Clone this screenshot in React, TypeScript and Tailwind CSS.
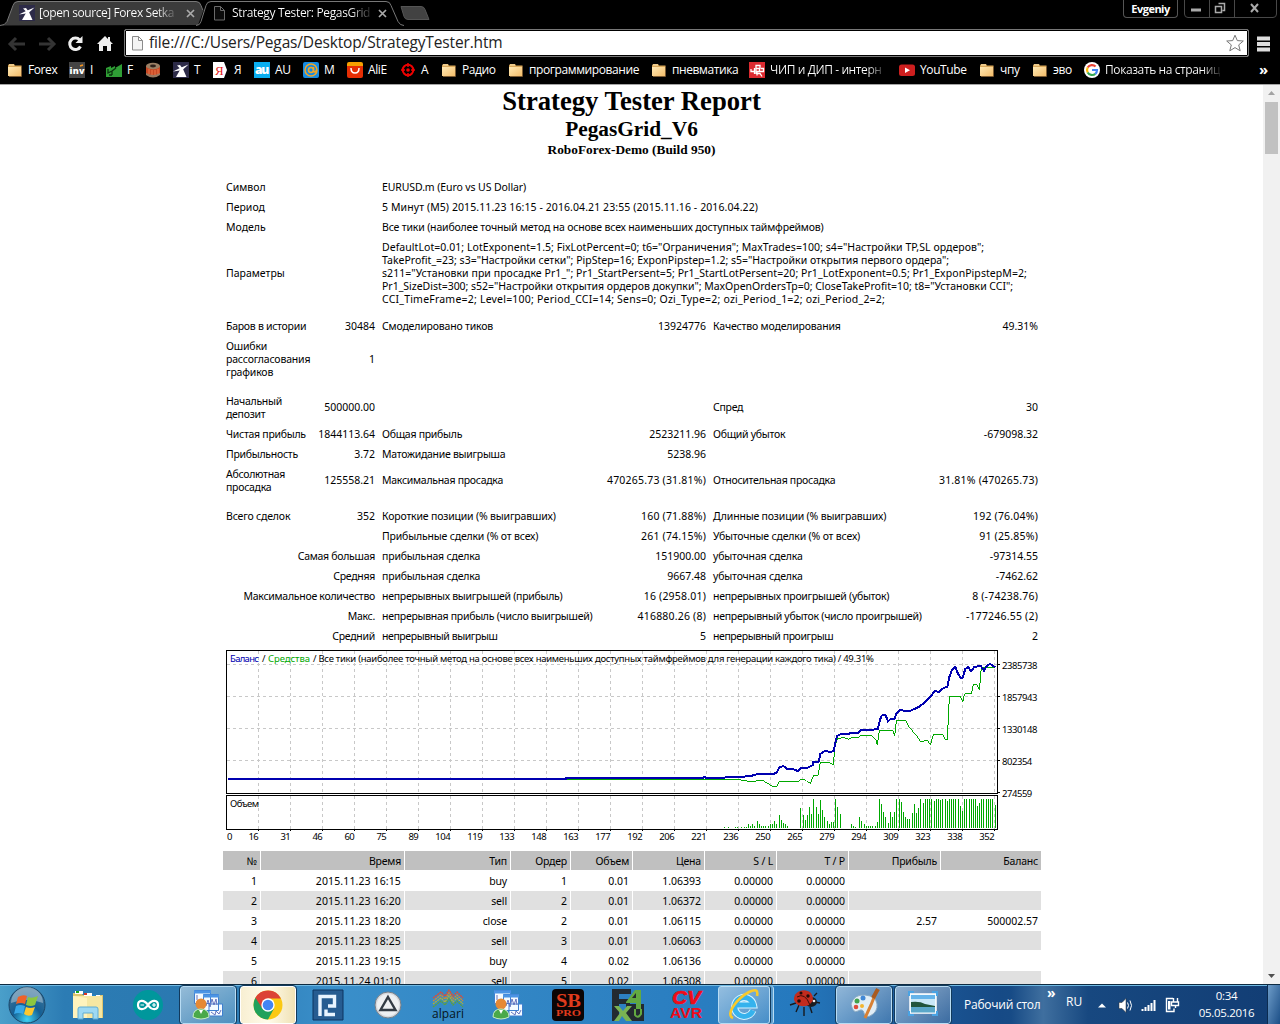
import React from 'react';

type IconProps = { children: React.ReactNode; size?: number; box?: number };

const Svg = ({ children, size = 16, box = 16 }: IconProps) => (
  <svg width={size} height={size} viewBox={`0 0 ${box} ${box}`} className="shrink-0 overflow-visible">
    {children}
  </svg>
);

/* ---------- bookmark icons ---------- */

const Folder = () => (
  <Svg>
    <path d="M1 3.5 2 2h5l1 1.5h6.5V14H1z" fill="#d9a758" />
    <path d="M1 5h13v9H1z" fill="url(#folder)" />
    <path d="M14.5 4v10.5H2" stroke="#7c5b32" fill="none" />
    <path d="M2 3h5" stroke="#ffe9b8" />
  </Svg>
);

const InvIcon = () => (
  <Svg>
    <path d="M0 0h16v16H0z" fill="#444" />
    <text x="0.5" y="12" fontSize="9" fontWeight="800" fill="#fff" textLength="14.5" fontFamily="Open Sans">inv</text>
    <path d="m11 4 3-1" stroke="#f7941d" strokeWidth="1.5" />
  </Svg>
);

const FactoryIcon = () => (
  <Svg>
    <path d="M0 6 5 4v2l4-2v2l7-4v13H0z" fill="#2f9e35" />
    <path d="M2 7v4l4-2v4m0-4 4-3m-4 7H3" stroke="#0a310d" strokeWidth="1.3" fill="none" />
  </Svg>
);

const ReelIcon = () => (
  <Svg>
    <path d="M1 4v8q7 6 14 0V4z" fill="#c64824" />
    <ellipse cx="8" cy="4" rx="7" ry="3.3" fill="#9b8065" />
    <ellipse cx="8" cy="4" rx="3" ry="1.4" fill="#2e211b" />
    <path d="M1 11v2q7 5 14 0v-2q-7 4-14 0" fill="#987961" />
    <path d="M4 7v5m3-4v5m3-5v5m3-6v5" stroke="#ed7748" />
  </Svg>
);

const MillIcon = () => (
  <Svg>
    <path d="M0 0h16v16H0z" fill="#2d2b48" />
    <path d="M7.500 7H10l3.500 8H3z" fill="#fff" />
    <path d="M0 9.500 7 6l8.500-3.500L10 7.500 7 8.500z" fill="#fff" />
    <path d="m4 3.500 3-.5 2.500 3.500L7.500 7z" fill="#fff" />
  </Svg>
);

const YandexIcon = () => (
  <Svg>
    <path d="M0 0h11l3 8-3 8H0z" fill="#fff" />
    <text x="2" y="13" fontSize="13" fill="#e51b23" fontFamily="Liberation Serif">Я</text>
  </Svg>
);

const AuIcon = () => (
  <Svg>
    <path d="M0 0h16v16H0z" fill="#0aaef0" />
    <text x="1" y="12" fontSize="12" fontWeight="800" fill="#fff" textLength="14" fontFamily="Open Sans">au</text>
  </Svg>
);

const MailIcon = () => (
  <Svg>
    <rect width="16" height="16" rx="2" fill="#168be2" />
    <circle cx="8" cy="8" r="6" fill="none" stroke="#f6a623" strokeWidth="1.5" />
    <circle cx="8" cy="8" r="2.5" fill="none" stroke="#f6a623" strokeWidth="1.5" />
    <path d="M10.5 5v4q1.500 2.500 3-1" fill="none" stroke="#f6a623" strokeWidth="1.500" />
  </Svg>
);

const AliIcon = () => (
  <Svg>
    <path d="M0 2q0-2 2-2h12q2 0 2 2v3H0z" fill="#f6a000" />
    <path d="M0 4h16v10q0 2-2 2H2q-2 0-2-2z" fill="#e62e04" />
    <path d="M4 6q0 5 4 5t4-5" fill="none" stroke="#fff" strokeWidth="1.5" />
  </Svg>
);

const TargetIcon = () => (
  <Svg>
    <circle cx="8" cy="8" r="5.300" fill="none" stroke="#e00" strokeWidth="2" />
    <circle cx="8" cy="8" r="1.800" fill="#e00" />
    <path d="M8 1v4m0 6v4M1 8h4m6 0h4" stroke="#e00" strokeWidth="1.500" />
  </Svg>
);

const ChipIcon = () => (
  <Svg>
    <path d="M0 0h16v16H0z" fill="#dc2a30" />
    <path d="M2 7v2.500h3.500V6m0 6V6M7 3.500h4v3H7zm5 3h2.500v3h-4v-3M7 6.500V12m0-2.500h3.500M8 10v3.500m0-2h3l2 3" fill="none" stroke="#fff" strokeWidth="1.300" />
  </Svg>
);

const YoutubeIcon = () => (
  <Svg>
    <rect y="2.500" width="16" height="11.500" rx="2.500" fill="#cd1f1f" />
    <path d="m6 5.500 5 2.700-5 2.700z" fill="#fff" />
  </Svg>
);

const GoogleIcon = () => (
  <Svg>
    <circle cx="8" cy="8" r="8" fill="#fff" />
    <path d="M11.600 4.600A5 5 0 0 0 3.700 5.500" fill="none" stroke="#ea4335" strokeWidth="2.200" />
    <path d="M3.700 5.500a5 5 0 0 0 0 5" fill="none" stroke="#fbbc05" strokeWidth="2.200" />
    <path d="M3.700 10.500a5 5 0 0 0 7.600 1.300" fill="none" stroke="#34a853" strokeWidth="2.200" />
    <path d="M11.300 11.800A5 5 0 0 0 13 8H8" fill="none" stroke="#4285f4" strokeWidth="2.200" />
  </Svg>
);

const PageIcon = ({ dark = false }: { dark?: boolean }) => (
  <Svg>
    <path
      d="M3.500 1.500h6l4 4v9.500h-10z M9.500 1.500v4h4"
      fill={dark ? '#0b0b0b' : '#f4f4f4'}
      stroke={dark ? '#6a6a6a' : '#8b8b8b'}
    />
  </Svg>
);

const CloseIcon = () => (
  <Svg size={9} box={9}>
    <path d="m1 1 7 7M8 1 1 8" stroke="#aaa" strokeWidth="1.700" />
  </Svg>
);

const bookmarks = [
  { icon: <Folder />, label: 'Forex', cls: 'w-[62px]' },
  { icon: <InvIcon />, label: 'I', cls: 'w-[37px]' },
  { icon: <FactoryIcon />, label: 'F', cls: 'w-[39px]' },
  { icon: <ReelIcon />, label: '', cls: 'w-[28px]' },
  { icon: <MillIcon />, label: 'T', cls: 'w-[40px]' },
  { icon: <YandexIcon />, label: 'Я', cls: 'w-[41px]' },
  { icon: <AuIcon />, label: 'AU', cls: 'w-[49px]' },
  { icon: <MailIcon />, label: 'M', cls: 'w-[44px]' },
  { icon: <AliIcon />, label: 'AliE', cls: 'w-[53px]' },
  { icon: <TargetIcon />, label: 'A', cls: 'w-[41px]' },
  { icon: <Folder />, label: 'Радио', cls: 'w-[67px]' },
  { icon: <Folder />, label: 'программирование', cls: 'w-[143px]' },
  { icon: <Folder />, label: 'пневматика', cls: 'w-[98px]' },
  { icon: <ChipIcon />, label: 'ЧИП и ДИП - интерн', cls: 'w-[150px]', fade: true },
  { icon: <YoutubeIcon />, label: 'YouTube', cls: 'w-[80px]' },
  { icon: <Folder />, label: 'чпу', cls: 'w-[53px]' },
  { icon: <Folder />, label: 'эво', cls: 'w-[52px]' },
  { icon: <GoogleIcon />, label: 'Показать на страниц', cls: 'w-[175px]', fade: true },
];

const Browser = () => (
  <header className="h-[85px] border-b border-[#a5a5a5] bg-black font-['Open_Sans','Noto_Sans',sans-serif] text-white">
    <div className="relative flex h-[28px]">
      <svg width="440" height="28" className="absolute left-0 top-0">
        <path d="M0 25.500q5 0 7-4l6-16q1-4 5-4h178q4 0 5 4l2 6-5 13.500z" fill="#3b3b3b" />
        <path d="M0 25.500q5 0 7-4l6-16q1-4 5-4h178q4 0 5 4l2 5" fill="none" stroke="#777" />
        <path d="M196 25.500q4 0 5-4l5-16q1-4 5-4h175q4 0 5 4l7 16q2 4 6 4" fill="#000" stroke="#777" />
        <path d="M401 6.500h20q3 0 4 3l4 10h-21q-3 0-4-3z" fill="#424242" stroke="#555" />
      </svg>
      <div className="relative flex w-[211px] items-center pb-[2px] pl-[19px] text-[12px]">
        <MillIcon />
        <span className="ml-[4px] mr-[8px] w-[139px] whitespace-nowrap bg-gradient-to-r from-white from-85% to-[#444] bg-clip-text tracking-[-0.420px] text-transparent">
          [open source] Forex Setka
        </span>
        <CloseIcon />
      </div>
      <div className="relative flex items-center pb-[2px] text-[12px]">
        <PageIcon dark />
        <span className="ml-[5px] mr-[7px] w-[139px] whitespace-nowrap bg-gradient-to-r from-white from-85% to-[#222] bg-clip-text tracking-[-0.350px] text-transparent">
          Strategy Tester: PegasGrid
        </span>
        <CloseIcon />
      </div>
      <div className="ml-auto mr-[3px] flex items-start gap-[6px]">
        <div className="flex h-[18px] w-[55px] justify-center rounded-b border border-t-0 border-[#555] text-[11px] font-bold leading-[18px] tracking-[-0.500px]">
          Evgeniy
        </div>
        <svg width="93" height="18" fill="none" stroke="#484848">
          <path d="M.5 0v14q0 3.500 3.500 3.500h85q3.500 0 3.500-3.500V0M25.500 0v17M50.500 0v17" />
          <path d="M7 10h10" stroke="#aaa" strokeWidth="3" />
          <path d="M34.500 3.500h6v7h-2m-7-4h6v6h-6z" stroke="#aaa" strokeWidth="1.500" />
          <path d="m67 4 7 8m0-8-7 8" stroke="#aaa" strokeWidth="2" />
        </svg>
      </div>
    </div>

    <div className="flex h-[29px] items-center">
      <svg width="124" height="28" fill="none">
        <path d="M10 15h15m-9-6-6 6 6 6M39 15h15" stroke="#343434" strokeWidth="3" />
        <path d="m48 9 6 6-6 6" stroke="#343434" strokeWidth="3" />
        <path d="M80.500 17.500a5.700 5.700 0 1 1-.8-6.500" stroke="#eee" strokeWidth="3" />
        <path d="M82.500 7v7h-7z" fill="#eee" />
        <path d="m97 15 8-8 3 3V8h2v4l3 3h-2v7h-4v-5h-4v5h-4v-7z" fill="#eee" />
      </svg>
      <div className="flex h-[28px] w-[1125px] items-center rounded-[2px] border border-[#777] bg-white pl-[4px] pr-[4px] text-[#222] outline-1 -outline-offset-2 outline-black">
        <PageIcon />
        <span className="ml-[4px] pb-[1px] text-[15.500px] leading-[23px] tracking-[-0.150px]">file:///C:/Users/Pegas/Desktop/StrategyTester.htm</span>
        <svg width="18" height="18" viewBox="0 0 18 18" className="ml-auto">
          <path d="m9 1.200 2.300 5.400 6 .4-4.600 3.900 1.500 5.900L9 13.600l-5.200 3.200 1.500-5.900L.7 7l6-.4z" fill="#fff" stroke="#777" />
        </svg>
      </div>
      <svg width="31" height="28">
        <path d="M8 9.500h13M8 15h13M8 20.500h13" stroke="#ddd" strokeWidth="3.800" />
      </svg>
    </div>

    <nav className="flex h-[26px] items-center pl-[7px] text-[12px] tracking-[-0.400px]">
      {bookmarks.map((b, i) => (
        <div key={i} className={`flex shrink-0 items-center gap-[5px] ${b.cls}`}>
          {b.icon}
          <span
            className={
              b.fade
                ? 'w-[115px] whitespace-nowrap bg-gradient-to-r from-white from-85% to-[#222] bg-clip-text text-transparent'
                : 'whitespace-nowrap'
            }
          >
            {b.label}
          </span>
        </div>
      ))}
      <span className="pb-[2px] text-[15px] font-bold">»</span>
    </nav>
  </header>
);

/* ---------- report ---------- */

const params = [
  {
    cls: 'tracking-[0.050px]',
    line: 'DefaultLot=0.01; LotExponent=1.5; FixLotPercent=0; t6="Ограничения"; MaxTrades=100; s4="Настройки TP,SL ордеров";',
  },
  {
    cls: 'tracking-normal',
    line: 'TakeProfit_=23; s3="Настройки сетки"; PipStep=16; ExponPipstep=1.2; s5="Настройки открытия первого ордера";',
  },
  {
    cls: 'tracking-[0.060px]',
    line: 's211="Установки при просадке Pr1_"; Pr1_StartPersent=5; Pr1_StartLotPersent=20; Pr1_LotExponent=0.5; Pr1_ExponPipstepM=2;',
  },
  {
    cls: 'tracking-[-0.020px]',
    line: 'Pr1_SizeDist=300; s52="Настройки открытия ордеров докупки"; MaxOpenOrdersTp=0; CloseTakeProfit=10; t8="Установки CCI";',
  },
  {
    cls: 'tracking-[0.210px]',
    line: 'CCI_TimeFrame=2; Level=100; Period_CCI=14; Sens=0; Ozi_Type=2; ozi_Period_1=2; ozi_Period_2=2;',
  },
];

const head = [
  { label: 'Символ', value: 'EURUSD.m (Euro vs US Dollar)', cls: 'tracking-[-0.100px]' },
  {
    label: 'Период',
    value: '5 Минут (M5) 2015.11.23 16:15 - 2016.04.21 23:55 (2015.11.16 - 2016.04.22)',
    cls: 'tracking-[0.090px]',
  },
  {
    label: 'Модель',
    value: 'Все тики (наиболее точный метод на основе всех наименьших доступных таймфреймов)',
    cls: 'tracking-[-0.170px]',
  },
];

const stats: (string[] | number)[] = [
  6,
  ['Баров в истории', '30484', 'Смоделировано тиков', '13924776', 'Качество моделирования', '49.31%'],
  ['Ошибки рассогласования графиков', '1', '', '', '', ''],
  8,
  ['Начальный депозит', '500000.00', '', '', 'Спред', '30'],
  ['Чистая прибыль', '1844113.64', 'Общая прибыль', '2523211.96', 'Общий убыток', '-679098.32'],
  ['Прибыльность', '3.72', 'Матожидание выигрыша', '5238.96', '', ''],
  ['Абсолютная просадка', '125558.21', 'Максимальная просадка', '470265.73 (31.81%)', 'Относительная просадка', '31.81% (470265.73)'],
  8,
  ['Всего сделок', '352', 'Короткие позиции (% выигравших)', '160 (71.88%)', 'Длинные позиции (% выигравших)', '192 (76.04%)'],
  ['', '', 'Прибыльные сделки (% от всех)', '261 (74.15%)', 'Убыточные сделки (% от всех)', '91 (25.85%)'],
  ['Самая большая', 'прибыльная сделка', '151900.00', 'убыточная сделка', '-97314.55'],
  ['Средняя', 'прибыльная сделка', '9667.48', 'убыточная сделка', '-7462.62'],
  ['Максимальное количество', 'непрерывных выигрышей (прибыль)', '16 (2958.01)', 'непрерывных проигрышей (убыток)', '8 (-74238.76)'],
  ['Макс.', 'непрерывная прибыль (число выигрышей)', '416880.26 (8)', 'непрерывный убыток (число проигрышей)', '-177246.55 (2)'],
  ['Средний', 'непрерывный выигрыш', '5', 'непрерывный проигрыш', '2'],
];

const tallRows = ['Начальный депозит', 'Абсолютная просадка'];

const spacing = (cell: string) => {
  if (/[а-я]/i.test(cell)) {
    if (cell.startsWith('непрерывный') && !cell.includes('(')) return 'tracking-[-0.420px]';
    return /%|дел|рассог/.test(cell) ? 'tracking-[-0.180px]' : 'tracking-[-0.280px]';
  }
  return cell.includes('(') ? 'tracking-[0.200px]' : '';
};

const Summary = () => (
  <table className="w-[820px] table-fixed border-separate border-spacing-px [&_td]:p-[3px]">
    <colgroup>
      <col className="w-[91px]" />
      <col className="w-[63px]" />
      <col className="w-[205px]" />
      <col className="w-[124px]" />
      <col className="w-[211px]" />
      <col />
    </colgroup>
    <tbody>
      {head.map((row) => (
        <tr key={row.label}>
          <td colSpan={2}>{row.label}</td>
          <td colSpan={4} className={row.cls}>{row.value}</td>
        </tr>
      ))}
      <tr>
        <td colSpan={2}>Параметры</td>
        <td colSpan={4} className="whitespace-nowrap">
          {params.map((p) => (
            <div key={p.line} className={p.cls}>{p.line}</div>
          ))}
        </td>
      </tr>
      {stats.map((row, i) => {
        if (typeof row === 'number') {
          return (
            <tr key={i} className={row === 6 ? 'h-[6px]' : 'h-[8px]'}>
              <td colSpan={6} className="p-0!" />
            </tr>
          );
        }
        // five cells: the first one spans label and value, aligned right
        const wide = row.length === 5;
        const tall = tallRows.includes(row[0]);
        return (
          <tr key={i}>
            {row.map((cell, j) => {
              const right = wide ? j % 2 === 0 : j % 2 === 1;
              return (
                <td
                  key={j}
                  colSpan={wide && j === 0 ? 2 : 1}
                  className={`h-[19px] ${spacing(cell)} ${right ? 'text-right' : ''} ${j > 0 || wide ? 'whitespace-nowrap' : ''} ${tall && j > 0 ? 'pb-[5px]!' : ''}`}
                >
                  {cell}
                </td>
              );
            })}
          </tr>
        );
      })}
    </tbody>
  </table>
);

// plotted at three units per pixel
const balance =
  '-1207,402 -192,402 -192,399 218,399 222,396 230,399 282,399 288,396 342,396 348,393 366,393 370,390 388,387 430,387 440,382 448,367 460,363 472,372 490,373 504,378 514,369 532,369 548,360 550,351 566,350 571,327 580,320 590,318 600,321 611,318 617,288 622,272 634,267 656,267 660,264 686,263 694,255 724,255 744,251 750,225 755,212 766,209 774,229 782,222 794,221 800,204 812,194 822,198 840,198 864,187 880,176 902,155 914,138 926,141 940,130 952,125 958,96 966,74 976,66 984,86 992,99 998,98 1006,72 1014,66 1023,79 1032,67 1052,62 1062,77 1070,63 1080,57 1096,67';
const equity =
  '-192,403 -174,403 -150,403 -48,403 218,403 330,403 334,407 350,407 356,410 376,410 380,407 400,407 416,417 428,424 440,424 448,409 506,409 512,403 524,403 530,409 542,415 550,392 564,391 571,352 598,352 610,361 614,310 622,280 634,280 637,276 656,283 662,279 686,277 692,270 724,271 738,285 742,300 748,257 790,258 794,274 799,227 828,227 838,247 862,275 872,290 892,286 902,299 910,268 938,268 944,282 952,284 958,155 992,155 998,171 1004,146 1024,146 1030,119 1042,119 1048,136 1054,67 1096,67';

// [x, height] of the volume bars
const volume = [
  [498, 1], [502, 1], [509, 1], [511, 1], [515, 1], [518, 1], [520, 1], [522, 4], [524, 2], [526, 4], [528, 2],
  [531, 7], [533, 4], [535, 2], [537, 2], [539, 2], [542, 2], [544, 4], [546, 4], [548, 7], [550, 4], [553, 13],
  [555, 8], [557, 5], [559, 4], [561, 2], [574, 20], [577, 13], [579, 8], [581, 13], [583, 21], [585, 14], [587, 29],
  [590, 21], [592, 14], [594, 28], [596, 18], [598, 11], [601, 7], [603, 4], [605, 6], [607, 6], [609, 29], [611, 21],
  [614, 14], [625, 4], [627, 2], [629, 1], [633, 11], [635, 7], [638, 4], [640, 2], [642, 2], [644, 2], [646, 2],
  [649, 2], [651, 6], [653, 29], [655, 24], [657, 16], [659, 11], [662, 5], [664, 16], [666, 11], [668, 16], [670, 29],
  [673, 29], [675, 26], [677, 16], [679, 11], [681, 9], [683, 9], [686, 15], [688, 24], [690, 15], [692, 20], [694, 29],
  [697, 25], [699, 29], [701, 29], [703, 29], [705, 29], [708, 27], [710, 29], [712, 29], [714, 28], [716, 29], [719, 29],
  [721, 27], [723, 29], [725, 29], [727, 29], [729, 29], [732, 29], [734, 22], [736, 17], [738, 29], [740, 29],
  [743, 29], [745, 29], [747, 29], [749, 29], [751, 22], [753, 25], [755, 29], [757, 29], [760, 29], [762, 29],
  [764, 29], [766, 29], [769, 23],
];

const ticks = [16, 31, 46, 60, 75, 89, 104, 119, 133, 148, 163, 177, 192, 206, 221, 236, 250, 265, 279, 294, 309, 323, 338, 352];
const levels = ['2385738', '1857943', '1330148', '802354', '274559'];

const Chart = () => (
  <svg width="820" height="196" className="ml-[4px] block font-['Noto_Sans',sans-serif] text-[9.500px]">
    <g shapeRendering="crispEdges" fill="none">
      <g stroke="#c8c8c8" strokeDasharray="3 3">
        {ticks.map((t, i) => (
          <path key={t} d={`M${32.5 + i * 32} 1V143M${32.5 + i * 32} 146V179`} />
        ))}
        {[14.5, 46.5, 78.5, 110.5].map((y) => (
          <path key={y} d={`M1 ${y}H771`} />
        ))}
      </g>
      <path d="M.5.500h771v143H.5zM.5 145.500h771v34H.5z" stroke="#000" />
      {ticks.map((t, i) => (
        <path key={t} d={`M${32.5 + i * 32} 179v2`} stroke="#000" />
      ))}
      {levels.map((l, i) => (
        <path key={l} d={`M771 ${14.5 + i * 32}h3`} stroke="#000" />
      ))}
      {volume.map(([x, h]) => (
        <path key={x} d={`M${x + 0.5} 178v${-h}`} stroke="#00a800" />
      ))}
      <g transform="translate(404 -5) scale(.33333)">
        <polyline points={equity} stroke="#00a800" strokeWidth="3" />
        <polyline points={balance} stroke="#0000b0" strokeWidth="6" />
      </g>
    </g>
    <text x="4" y="12" fill="#0000b0" textLength="29">Баланс</text>
    <text x="36" y="12">/</text>
    <text x="42" y="12" fill="#00a800" textLength="42">Средства</text>
    <text x="87" y="12" textLength="561">
      / Все тики (наиболее точный метод на основе всех наименьших доступных таймфреймов для генерации каждого тика) / 49.31%
    </text>
    <text x="4" y="157" textLength="29">Объем</text>
    <text x="1" y="190">0</text>
    {ticks.map((t, i) => (
      <text key={t} x={32.8 + i * 32} y="190" textAnchor="end" textLength={String(t).length * 5.2}>
        {t}
      </text>
    ))}
    {levels.map((l, i) => (
      <text key={l} x="776" y={19 + i * 32} textLength={l.length * 5.05}>
        {l}
      </text>
    ))}
  </svg>
);

const columns = ['№', 'Время', 'Тип', 'Ордер', 'Объем', 'Цена', 'S / L', 'T / P', 'Прибыль', 'Баланс'];
const trades = [
  ['1', '2015.11.23 16:15', 'buy', '1', '0.01', '1.06393', '0.00000', '0.00000'],
  ['2', '2015.11.23 16:20', 'sell', '2', '0.01', '1.06372', '0.00000', '0.00000'],
  ['3', '2015.11.23 18:20', 'close', '2', '0.01', '1.06115', '0.00000', '0.00000', '2.57', '500002.57'],
  ['4', '2015.11.23 18:25', 'sell', '3', '0.01', '1.06063', '0.00000', '0.00000'],
  ['5', '2015.11.23 19:15', 'buy', '4', '0.02', '1.06136', '0.00000', '0.00000'],
  ['6', '2015.11.24 01:10', 'sell', '5', '0.02', '1.06308', '0.00000', '0.00000'],
];

const Trades = () => (
  <table className="w-[820px] table-fixed border-separate border-spacing-px text-right [&_td]:px-[3px] [&_td]:pb-[2px] [&_td]:pt-[4px]">
    <colgroup>
      <col className="w-[37px]" />
      <col className="w-[143px]" />
      <col className="w-[105px]" />
      <col className="w-[59px]" />
      <col className="w-[61px]" />
      <col className="w-[71px]" />
      <col className="w-[71px]" />
      <col className="w-[71px]" />
      <col className="w-[91px]" />
      <col />
    </colgroup>
    <tbody>
      <tr className="bg-[#c0c0c0] tracking-[-0.200px]">
        {columns.map((c) => (
          <td key={c}>{c}</td>
        ))}
      </tr>
      {trades.map((row, i) => (
        <tr key={row[0]} className={i % 2 ? 'bg-[#e0e0e0]' : ''}>
          {row.map((cell, j) => (
            <td key={j} className={`whitespace-nowrap ${j === 1 ? 'tracking-[0.120px]' : ''} ${j === 2 ? 'tracking-[-0.150px]' : ''}`}>
              {cell}
            </td>
          ))}
          {row.length === 8 && <td colSpan={2} />}
        </tr>
      ))}
    </tbody>
  </table>
);

/* ---------- taskbar ---------- */

const ExplorerIcon = () => (
  <Svg size={32} box={32}>
    <path d="M1 4h8l2 2h20v23H1z" fill="#dfc56f" />
    <path d="M3 2h8v3H3zM12 4h8v3h-8zM20 6h8v3h-8z" fill="#fff" />
    <path d="M4 2h3v2H4z" fill="#18a818" />
    <path d="M12 4h3v2h-3z" fill="#d32" />
    <path d="M20 6h4v2h-4z" fill="#28c" />
    <path d="M1 7h29v22H1z" fill="#f6e7a2" />
    <path d="M1 7 15 9v20H1z" fill="#fff3bd" />
    <path d="M6 30V20q0-2 2-2h16q2 0 2 2v10h-5v-6H11v6z" fill="#9ed9f3" stroke="#5eacd3" />
  </Svg>
);

const ArduinoIcon = () => (
  <Svg size={30} box={30}>
    <circle cx="15" cy="15" r="15" fill="#00979c" />
    <path d="M15 15C11 9 5 10 5 15s6 6 10 0 10-5 10 0-6 6-10 0z" fill="none" stroke="#fff" strokeWidth="2.200" />
    <path d="M7.500 15h3.500m8 0h4M21 13v4" stroke="#fff" strokeWidth="1.200" />
  </Svg>
);

const TesterIcon = () => (
  <Svg size={32} box={32}>
    <g fill="#f4faff" stroke="#3f7fd0">
      <path d="M2.500 1.500h16v13h-16zM17 15h13.500v12H17zM11.500 5.500h15v16h-15z" />
    </g>
    <path d="M2 3h17M11 7h16" stroke="#4b94e4" strokeWidth="3" />
    <path d="m14 17 2-6 2 7 2-8 2 6 2-6 1 6M5 6v5m14 12 4 3 1-4 3 3 2-4" fill="none" stroke="#6673bd" />
    <circle cx="9" cy="15" r="5.500" fill="#e68934" />
    <path d="M1 28q0-8 8-8t8 8q-8 4-16 0" fill="#4aa94a" stroke="#c8edc1" />
    <path d="m7 21 2 4 2-4" fill="#fff" />
  </Svg>
);

const ChromeIcon = () => (
  <Svg size={30} box={30}>
    <circle cx="15" cy="15" r="14.500" fill="#fbc913" />
    <path d="M15 15 2.400 7.800A14.500 14.500 0 0 0 15 29.500l6-11z" fill="#1fa15b" />
    <path d="M2.400 7.800 9 18l6-9.500h12.900a14.500 14.500 0 0 0-25.500-.7" fill="#dc4235" />
    <circle cx="15" cy="15" r="6.700" fill="#fff" />
    <circle cx="15" cy="15" r="5.300" fill="#4285f4" />
  </Svg>
);

const RoboIcon = () => (
  <Svg size={32} box={32}>
    <path d="M1 1h30v30H1z" fill="#265c91" stroke="#0c3561" />
    <path d="M8 27V7.500h14.500v9.500h-6.500M14 20.500v5h9" fill="none" stroke="#e8f4ff" strokeWidth="3.400" />
  </Svg>
);

const DeltaIcon = () => (
  <Svg size={28} box={28}>
    <circle cx="14" cy="14" r="13" fill="#d8dade" stroke="#777f88" />
    <circle cx="14" cy="14" r="11" fill="#eef0f2" />
    <path d="m14 6 7.500 13h-15z" fill="none" stroke="#333b44" strokeWidth="2.400" />
  </Svg>
);

const AlpariIcon = () => (
  <Svg size={34} box={34}>
    <g fill="none" strokeWidth="1.300" strokeDasharray="2 .7">
      <path d="m2 10 8-6 4 4 4-6 4 6 4-4 6 6" stroke="#e94a2c" />
      <path d="m2 13 8-6 4 4 4-6 4 6 4-4 6 6" stroke="#dd8a29" />
      <path d="m2 16 8-6 4 4 4-6 4 6 4-4 6 6" stroke="#b7b32e" />
      <path d="m2 19 8-6 4 4 4-6 4 6 4-4 6 6" stroke="#5e9f3a" />
    </g>
    <text x="1" y="30" fontSize="12" textLength="32" fill="#061420" fontFamily="Open Sans">alpari</text>
  </Svg>
);

const SbIcon = () => (
  <Svg size={32} box={32}>
    <rect width="32" height="32" rx="4" fill="#0b0505" />
    <text x="4" y="18" fontSize="18" fontWeight="700" textLength="25" lengthAdjust="spacingAndGlyphs" fill="#e03b1c" fontFamily="Liberation Serif">SB</text>
    <text x="4" y="27" fontSize="8" fontWeight="700" textLength="25" lengthAdjust="spacingAndGlyphs" fill="#e03b1c" fontFamily="Liberation Serif">PRO</text>
  </Svg>
);

const FxIcon = () => (
  <Svg size={32} box={32}>
    <path d="M0 0h19v5H7v5h11v5H7v17H0zM14 15h18v17H14z" fill="#232a30" />
    <path d="m14 13 9-12h6v19h-5v-6h-10z" fill="#62a941" />
    <path d="M20 9h4V4z" fill="#232a30" />
    <path d="m2 17 5 0 4 5 4-5h5l-6 7 6 8h-6l-4-5-3 5H2l6-8z" fill="#7ab352" />
    <path d="M23 20v6q3 4 6-1v-5" fill="none" stroke="#62a941" strokeWidth="2" />
  </Svg>
);

const CvIcon = () => (
  <Svg size={34} box={34}>
    <text x="2" y="16" fontSize="19" fontStyle="italic" fontWeight="700" textLength="29" lengthAdjust="spacingAndGlyphs" fill="#f00b18" stroke="#f00b18" strokeWidth=".6" fontFamily="Liberation Sans">CV</text>
    <text x="0" y="30" fontSize="15.500" fontWeight="700" textLength="32" lengthAdjust="spacingAndGlyphs" fill="#f00b18" fontFamily="Liberation Sans">AVR</text>
  </Svg>
);

const IeIcon = () => (
  <Svg size={32} box={32}>
    <path d="M25 21.500A9.500 9.500 0 1 1 25.500 16H8" fill="none" stroke="#d7f3ff" strokeWidth="7" />
    <path d="M25 21.500A9.500 9.500 0 1 1 25.500 16H8" fill="none" stroke="#35b2ed" strokeWidth="5" />
    <path d="M5 29C-3 26 8 10 21 3q10-5 8 4" fill="none" stroke="#f7c92d" strokeWidth="2.600" />
  </Svg>
);

const BugIcon = () => (
  <Svg size={32} box={32}>
    <path d="m7 14-6 2m9 0-3 7m8-5 0 9m6-9 2 6m3-11 5 1m-6-7 3-3" stroke="#17191e" strokeWidth="1.400" fill="none" />
    <ellipse cx="22" cy="13" rx="6" ry="5" fill="#1c1d21" />
    <path d="M5 11C4 2 16-2 22 4q5 7-2 12Q9 20 5 11" fill="#c22c1e" />
    <path d="M8 8q8-5 13 8" stroke="#3b0d09" fill="none" />
    <circle cx="10" cy="12" r="1.800" fill="#210a09" />
    <circle cx="12" cy="4" r="1.500" fill="#210a09" />
    <circle cx="19" cy="7" r="1.700" fill="#210a09" />
    <circle cx="25" cy="12" r="1.300" fill="#eee" />
  </Svg>
);

const PaintIcon = () => (
  <Svg size={32} box={32}>
    <path d="M3 15Q6 5 17 6t12 9-7 12q-5 2-6-3t-6-2-7-7" fill="#e1eef7" stroke="#8baac3" />
    <circle cx="9" cy="12" r="2.500" fill="#40a24c" />
    <circle cx="15" cy="9" r="2.500" fill="#4289d6" />
    <circle cx="8" cy="18" r="2.300" fill="#e04c3c" />
    <circle cx="14" cy="17" r="2" fill="#f3b531" />
    <path d="m29 1-6 15-6 13" stroke="#d88134" strokeWidth="3" fill="none" />
    <path d="m30 0-5 9" stroke="#a85b22" strokeWidth="4" />
  </Svg>
);

const PictureIcon = () => (
  <Svg size={32} box={32}>
    <path d="M3 5h26v19H3z" fill="#c9e8f8" stroke="#fff" strokeWidth="1.500" />
    <path d="M4 6h24v4H4z" fill="#65b4ea" />
    <path d="M4 13q9-1 14 2l10 2v2H4z" fill="#21553c" />
    <path d="M4 18h24v5.500H4z" fill="#5aa7c9" />
    <path d="M2 7V3h5m18 0h5v4m0 15v4h-5M7 26H2v-4" fill="none" stroke="#4aa3e3" strokeWidth="2" />
  </Svg>
);

const active = 'h-[38px] w-[56px] rounded-[3px] border border-[#b8dcf3] bg-gradient-to-br from-white/50 to-white/15 outline-1 outline-[#123a5c]';
const stacked = 'mr-[4px] h-[38px] w-[52px] rounded-[3px] border border-[#b8dcf3] bg-gradient-to-br from-white/50 to-white/15 shadow-[1px_0_0_#123a5c,3px_0_0_#5b9bcb,4px_0_0_#b8dcf3]';

const apps = [
  { icon: <ExplorerIcon />, cls: '' },
  { icon: <ArduinoIcon />, cls: '' },
  { icon: <TesterIcon />, cls: active },
  { icon: <ChromeIcon />, cls: 'h-[38px] w-[56px] rounded-[3px] border border-white bg-gradient-to-r from-[#f8efd2] via-[#fffbea] to-[#f0e2b5] outline-1 outline-[#123a5c]' },
  { icon: <RoboIcon />, cls: '' },
  { icon: <DeltaIcon />, cls: '' },
  { icon: <AlpariIcon />, cls: '' },
  { icon: <TesterIcon />, cls: '' },
  { icon: <SbIcon />, cls: '' },
  { icon: <FxIcon />, cls: '' },
  { icon: <CvIcon />, cls: '' },
  { icon: <IeIcon />, cls: stacked },
  { icon: <BugIcon />, cls: '' },
  { icon: <PaintIcon />, cls: active },
  { icon: <PictureIcon />, cls: active },
];

const Taskbar = () => (
  <footer className="flex h-[40px] items-center border-t border-[#0e2b42] bg-[linear-gradient(90deg,#4a9fca_0%,#2c7cb4_5%,#2a78b0_16%,#3a8fca_26%,#2f83c3_45%,#2579be_62%,#1b5797_72%,#164a86_78%,#174b86_79%,#3f6f9f_81.500%,#174880_85%,#123d74_100%)] font-['Open_Sans','Noto_Sans',sans-serif] text-white shadow-[inset_0_1px_0_#6fb8e2]">
    <div className="flex w-[58px] shrink-0 pl-[8px]">
      <svg width="38" height="38" viewBox="0 0 38 38">
        <circle cx="19" cy="19" r="18" fill="url(#orb)" stroke="#1b4668" />
        <path d="M3 17a16 16 0 0 1 32 0Q19 11 3 17" fill="#fff" opacity=".35" />
        <path d="M10 11q5-3 9-1l-2 8q-4-2-9 0z" fill="#ef6228" />
        <path d="M20 11q4 2 10-1l-3 9q-4 2-9 0z" fill="#8cc63f" />
        <path d="M8 20q4-2 9 0l-2 8q-4-2-9 0z" fill="#38a8e8" />
        <path d="M18 21q4 2 9 0l-3 8q-4 2-8-1z" fill="#fdc82f" />
      </svg>
    </div>
    {apps.map((app, i) => (
      <div key={i} className={`flex shrink-0 justify-center ${i < 9 ? 'w-[60px]' : 'w-[59px]'}`}>
        <div className={`flex items-center justify-center ${app.cls}`}>{app.icon}</div>
      </div>
    ))}
    <div className="ml-[12px] w-[83px] whitespace-nowrap text-[12px] tracking-[-0.250px]">Рабочий стол</div>
    <div className="w-[19px] pb-[24px] text-[14px] font-bold leading-none">»</div>
    <div className="w-[30px] pb-[5px] text-[12px]">RU</div>
    <svg width="92" height="24" fill="none" stroke="#fff">
      <path d="M2 14.500h8l-4-4z" fill="#fff" stroke="none" />
      <path d="M23 9.500h3l4-4v14l-4-4h-3z" fill="#fff" stroke="#333" strokeWidth=".5" />
      <path d="M31.500 9.500q2 3 0 6m2.500-8q3 5 0 10" />
      <path d="M46.500 18v-2m3 2v-4m3 4v-6m3 6v-8m3 8v-11" strokeWidth="2" />
      <path d="M77 5.500h-6.500v13H78v-3M77.500 5v4m4-4v4m-6 0h7v3.500h-7zm4 3v3" strokeWidth="1.400" />
      <path d="M72 8h2.500v8.500H72z" fill="#fff" stroke="none" />
    </svg>
    <div className="flex-1 pb-[1px] pr-[2px] text-center text-[11.500px] leading-[17px] tracking-[-0.300px]">
      <div>0:34</div>
      <div>05.05.2016</div>
    </div>
    <div className="h-full w-[13px] border-l border-[#0b2b50] bg-gradient-to-br from-[#6d9cc8] to-[#1b4f87]" />
  </footer>
);

export default function App() {
  return (
    <div className="flex h-[1024px] w-[1280px] flex-col overflow-hidden bg-white text-black">
      <svg width="0" height="0" className="absolute">
        <defs>
          <linearGradient id="folder" x1="0" y1="0" x2="1" y2="1">
            <stop offset="0" stopColor="#ffe9b4" />
            <stop offset="1" stopColor="#f3bd6b" />
          </linearGradient>
          <radialGradient id="orb" cx=".5" cy=".9" r=".8">
            <stop offset="0" stopColor="#3fd3f5" />
            <stop offset=".5" stopColor="#155f94" />
            <stop offset="1" stopColor="#3c7399" />
          </radialGradient>
        </defs>
      </svg>
      <Browser />
      <div className="flex h-[899px] overflow-hidden">
        <main className="flex-1 overflow-hidden pl-[222px] font-['Noto_Sans',sans-serif] text-[10.500px] leading-[13px]">
          <div className="h-[92px] w-[819px] pt-[1px] text-center font-['Liberation_Serif',serif] font-bold">
            <div className="text-[26.670px] leading-[31px]">Strategy Tester Report</div>
            <div className="text-[21.330px] leading-[25px]">PegasGrid_V6</div>
            <div className="text-[13.330px] leading-[15px]">RoboForex-Demo (Build 950)</div>
          </div>
          <Summary />
          <div className="h-[203px] pt-[3px]">
            <Chart />
          </div>
          <Trades />
        </main>
        <aside className="flex w-[17px] flex-col items-center bg-[#f1f1f1]">
          <svg width="17" height="17"><path d="m5 10 3.500-4 3.500 4z" fill="#a3a3a3" /></svg>
          <div className="h-[52px] w-[13px] bg-[#c1c1c1]" />
          <svg width="17" height="17" className="mt-auto"><path d="m5 7 3.500 4L12 7z" fill="#505050" /></svg>
        </aside>
      </div>
      <Taskbar />
    </div>
  );
}
